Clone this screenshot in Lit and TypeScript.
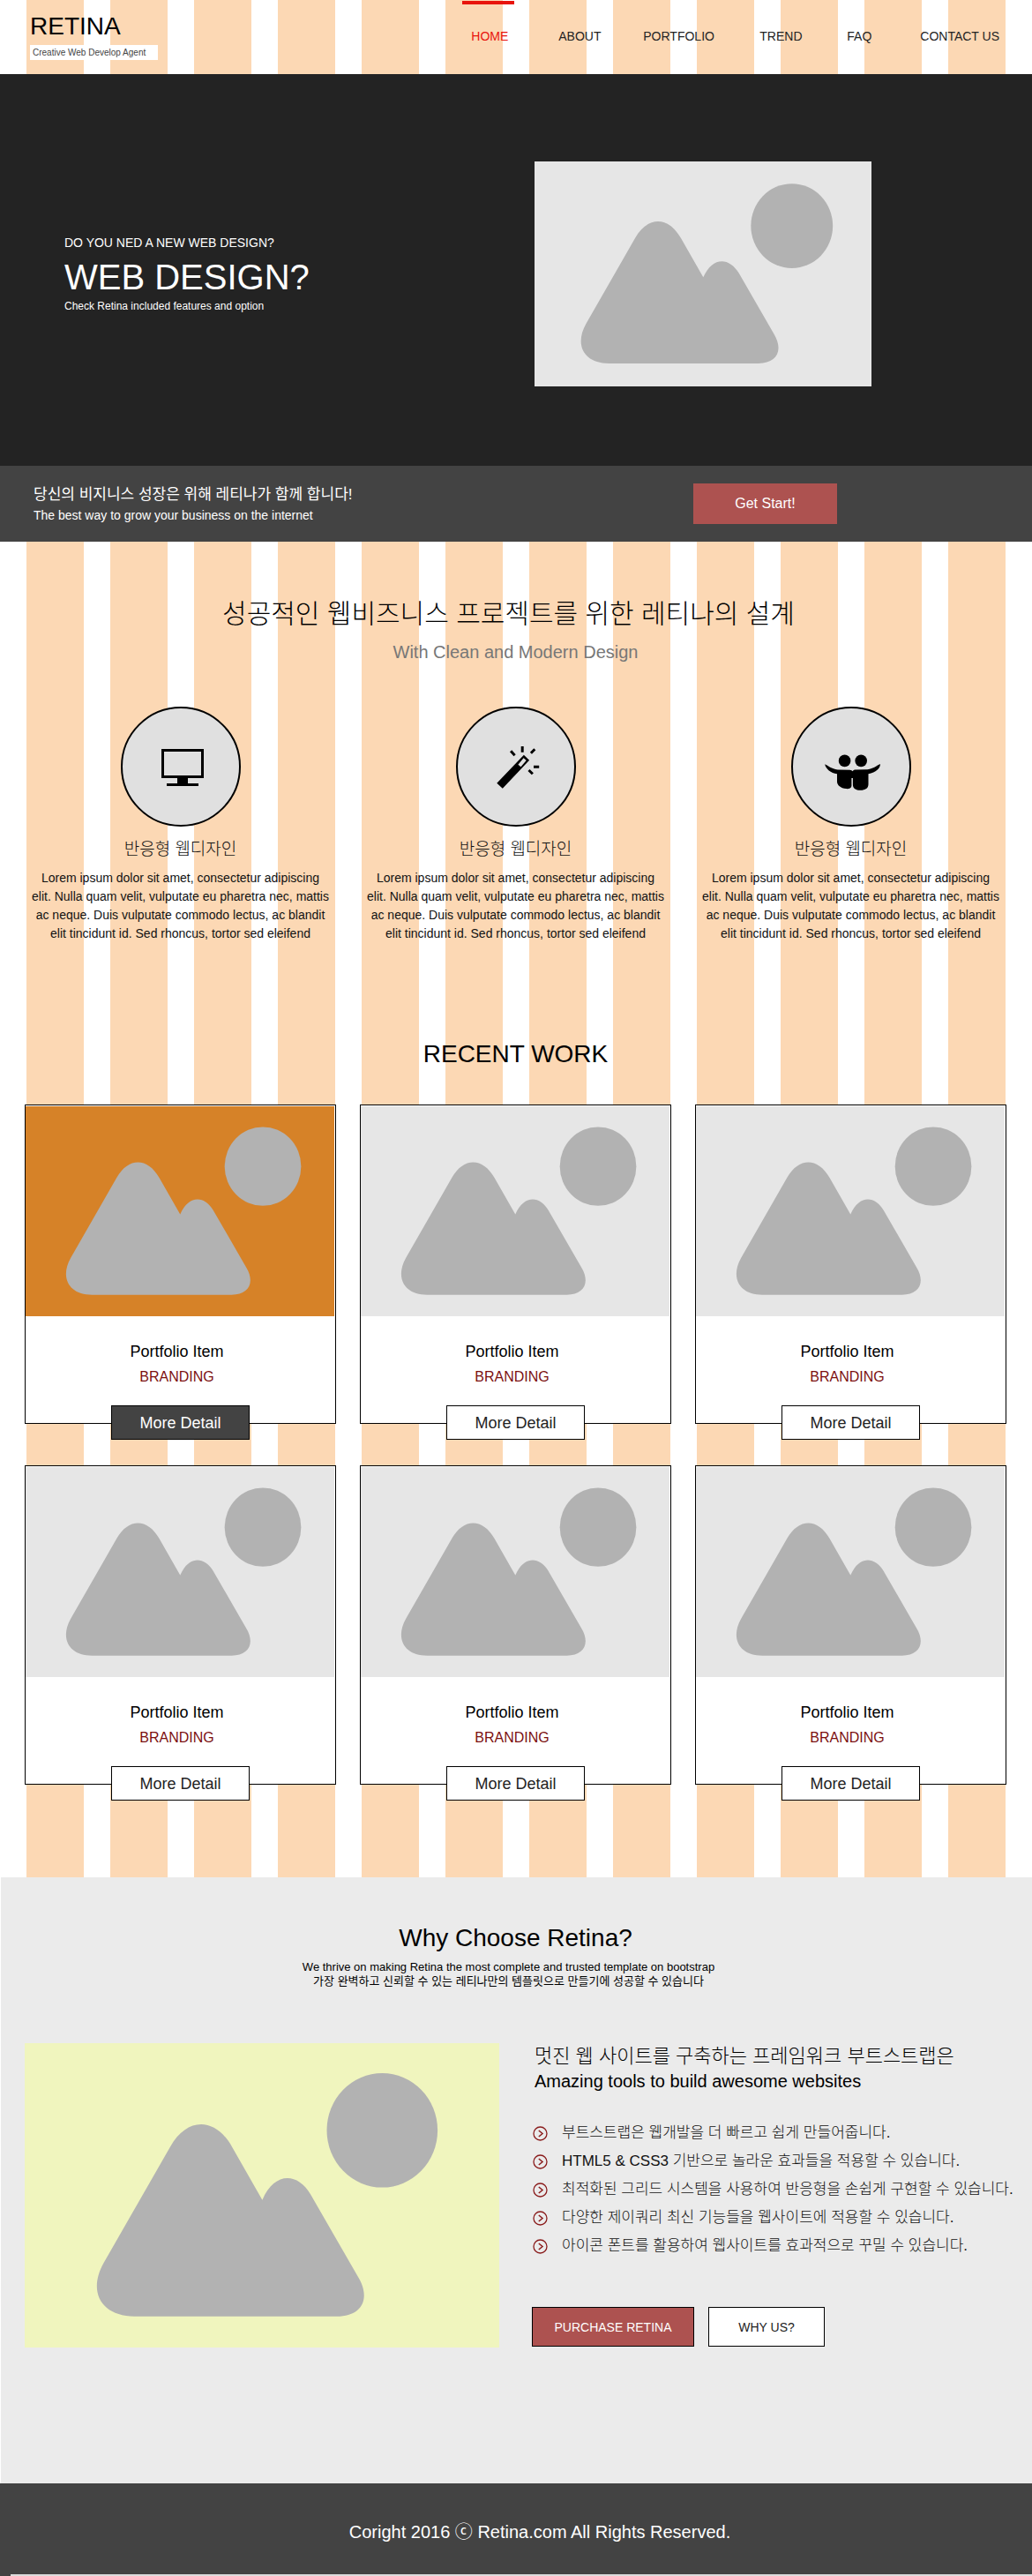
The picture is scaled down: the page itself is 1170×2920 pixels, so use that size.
import { LitElement, html, css, svg } from "lit";
import { customElement, property } from "lit/decorators.js";
import { classMap } from "lit/directives/class-map.js";

const reset = css`
  *,
  *::before,
  *::after {
    box-sizing: border-box;
  }
  h1,
  h2,
  h3,
  p,
  ul {
    margin: 0;
    padding: 0;
    font-weight: 400;
  }
  ul {
    list-style: none;
  }
  a {
    color: inherit;
    text-decoration: none;
  }
  button {
    margin: 0;
    padding: 0;
    font-family: inherit;
    cursor: pointer;
    border-radius: 0;
  }
`;

/** Landscape placeholder; fills its box and crops at the sides. */
@customElement("picture-placeholder")
export class PicturePlaceholder extends LitElement {
  static styles = css`
    :host {
      display: block;
      background: #e6e6e6;
    }
    svg {
      display: block;
      width: 100%;
      height: 100%;
    }
  `;

  render() {
    return html`<svg
      viewBox="0 0 538 345"
      preserveAspectRatio="xMidYMid slice"
      fill="#b2b2b2"
      aria-hidden="true"
    >
      <ellipse cx="405.3" cy="98.8" rx="62.8" ry="64.8" />
      <path
        d="M165 117.5C184 83.5 216 83.5 235 117.5L269.4 177.7C283 146 309 146 324 171.3L378 265C393 290 382 309.7 354 309.7H124.5C87 309.7 71 282 89.6 249Z"
      />
    </svg>`;
  }
}

@customElement("portfolio-card")
export class PortfolioCard extends LitElement {
  @property() heading = "";
  @property() category = "";
  @property({ type: Boolean }) active = false;

  static styles = [
    reset,
    css`
      :host {
        display: block;
      }
      .card {
        display: flex;
        flex-direction: column;
        align-items: center;
        padding-top: 1px;
        border: 1px solid #000;
        background: #fff;
      }
      .thumb {
        width: 100%;
        aspect-ratio: 351 / 238;
        border-right: 1px solid #fff;
      }
      .thumb.active {
        background: #d68228;
      }
      .caption {
        padding: 28px 8px 21px 0;
        text-align: center;
      }
      .heading {
        font-size: 18px;
        line-height: 24px;
        color: #000;
      }
      .category {
        margin-top: 6px;
        font-size: 16px;
        line-height: 22px;
        color: #7c0f0f;
      }
      .more {
        width: 157px;
        height: 39px;
        margin-bottom: -19px;
        border: 1px solid #000;
        background: #fff;
        color: #232323;
        font-size: 18px;
        line-height: 24px;
      }
      .more.active {
        background: #434343;
        color: #fff;
      }
    `,
  ];

  render() {
    const state = { active: this.active };
    return html`<article class="card">
      <picture-placeholder
        class=${classMap({ thumb: true, ...state })}
      ></picture-placeholder>
      <div class="caption">
        <h3 class="heading">${this.heading}</h3>
        <p class="category">${this.category}</p>
      </div>
      <button type="button" class=${classMap({ more: true, ...state })}>
        More Detail
      </button>
    </article>`;
  }
}

const monitorIcon = svg`
  <path fill-rule="evenodd" d="M46 48h48v33H46zM49 51v27h42V51z" />
  <path d="M64 81h12v6h12v3H52v-3h12z" />`;

const wandIcon = svg`
  <path fill-rule="evenodd"
    d="M46.3 86.7L76.9 54.7 83.1 60.7 52.8 92.7zM76.6 58.3L70.4 65.7 73.5 68.3 79.7 61z" />
  <path fill="none" stroke="#000" stroke-width="3"
    d="M75.2 45v6.7M62.1 50.3l4.5 5M89.3 48.3l-4.4 4.4M88 68.3h6.2M82.5 72l4.4 4.3" />`;

const friendsIcon = svg`
  <circle cx="60.6" cy="61.4" r="6.8" />
  <circle cx="79.2" cy="61.4" r="6.8" />
  <path d="M38.2 65.2C42 66.8 45.5 70.6 52.7 71.4L66.5 71.7C68 71.7 69 72.5 69.6 73.3 70.2 72.3 71.5 71.6 73 71.6L86.5 71.2C93.5 70.4 97 66.8 100.9 65.1 101.3 69.8 96 74.6 87.5 76.3V88C87.5 92.5 84 94.8 78.5 94.8 73 94.8 69.9 92.5 69.9 88.5V81H68.4V90C68 92.5 65.5 93.3 62.5 93.1 56 92.5 52 89 52 85V76.3C45 75.2 39 70.5 38.2 65.2Z" />`;

const NAV = ["HOME", "ABOUT", "PORTFOLIO", "TREND", "FAQ", "CONTACT US"];
const FEATURES = [monitorIcon, wandIcon, friendsIcon];
const WORKS = [true, false, false, false, false, false];
const REASONS = [
  "부트스트랩은 웹개발을 더 빠르고 쉽게 만들어줍니다.",
  "HTML5 & CSS3 기반으로 놀라운 효과들을 적용할 수 있습니다.",
  "최적화된 그리드 시스템을 사용하여 반응형을 손쉽게 구현할 수 있습니다.",
  "다양한 제이쿼리 최신 기능들을 웹사이트에 적용할 수 있습니다.",
  "아이콘 폰트를 활용하여 웹사이트를 효과적으로 꾸밀 수 있습니다.",
];

@customElement("app-root")
export class AppRoot extends LitElement {
  static styles = [
    reset,
    css`
      :host {
        display: block;
        font-family: "Liberation Sans", Arial, "Noto Sans CJK KR", sans-serif;
        color: #000;
        background: repeating-linear-gradient(
          to right,
          #fff 0 30px,
          #fcd8b4 30px 95px
        );
      }

      .header {
        display: flex;
        justify-content: space-between;
        align-items: flex-start;
        min-height: 84px;
        padding: 0 30px 0 34px;
      }
      .brand {
        display: flex;
        flex-direction: column;
        align-items: flex-start;
        gap: 5px;
        padding-top: 14px;
      }
      .logo {
        font-size: 28px;
        line-height: 32px;
      }
      .tagline {
        padding: 0 14px 0 3px;
        background: #fff;
        color: #444;
        font-size: 10px;
        line-height: 17px;
      }
      .menu {
        display: grid;
        grid-template-columns: 99px 96px 132px 99px 83px auto;
        justify-items: start;
        padding-top: 1px;
      }
      .menu-link {
        display: block;
        padding: 26px 7px 0 10px;
        border-top: 4px solid transparent;
        color: #232323;
        font-size: 14px;
        line-height: 20px;
        white-space: nowrap;
      }
      .menu-link.current {
        border-top-color: #e8140c;
        color: #e8140c;
      }

      .hero {
        display: grid;
        grid-template-columns: 533fr 382fr;
        align-items: center;
        padding: 99px 182px 90px 73px;
        background: #232323;
        color: #fff;
      }
      .hero-kicker {
        font-size: 14px;
        line-height: 20px;
      }
      .hero-title {
        margin-top: 5px;
        font-size: 40px;
        line-height: 48px;
      }
      .hero-note {
        font-size: 12px;
        line-height: 18px;
      }
      .hero-picture {
        aspect-ratio: 382 / 255;
      }

      .callout {
        display: flex;
        justify-content: space-between;
        align-items: center;
        padding: 20px 221px 20px 38px;
        background: #434343;
        color: #fff;
      }
      .callout-title {
        font-size: 17px;
        line-height: 26px;
      }
      .callout-text {
        font-size: 14px;
        line-height: 20px;
      }
      .start {
        width: 163px;
        height: 46px;
        border: 0;
        background: #ad5250;
        color: #fff;
        font-size: 16px;
        line-height: 20px;
      }

      .features {
        padding: 60px 29px 0 28px;
        text-align: center;
      }
      .lead {
        padding-right: 16px;
      }
      .features-title {
        font-size: 30px;
        font-weight: 300;
        line-height: 44px;
      }
      .features-sub {
        margin-top: 8px;
        color: #777;
        font-size: 20px;
        line-height: 26px;
      }
      .columns {
        display: grid;
        grid-template-columns: repeat(3, minmax(0, 1fr));
        column-gap: 27px;
      }
      .feature-list {
        margin-top: 49px;
      }
      .feature {
        display: flex;
        flex-direction: column;
        align-items: center;
      }
      .feature-icon {
        display: block;
        width: 136px;
        height: 136px;
      }
      .feature-title {
        margin-top: 12px;
        color: #111;
        font-size: 19px;
        font-weight: 300;
        line-height: 28px;
      }
      .feature-text {
        margin-top: 8px;
        color: #111;
        font-size: 14px;
        line-height: 21px;
      }

      .works {
        padding: 108px 29px 105px 28px;
      }
      .section-title {
        font-size: 28px;
        line-height: 36px;
        text-align: center;
      }
      .work-list {
        margin-top: 39px;
        row-gap: 47px;
      }

      .why {
        margin-left: 1px;
        padding: 51px 29px 154px 27px;
        background: #ebebeb;
      }
      .why-page {
        background: #fff;
      }
      .why-sub {
        font-size: 13px;
        line-height: 16px;
        text-align: center;
      }
      .why-intro {
        margin-top: 7px;
      }
      .why-body {
        display: grid;
        grid-template-columns: repeat(2, minmax(0, 1fr));
        column-gap: 37px;
        align-items: start;
        margin-top: 62px;
      }
      .why-picture {
        aspect-ratio: 538 / 345;
        background: #f0f5be;
      }
      .why-heading {
        padding-left: 3px;
        font-size: 22px;
        font-weight: 300;
        line-height: 30px;
      }
      .why-tools {
        padding-left: 3px;
        font-size: 20px;
        line-height: 26px;
      }
      .reasons {
        margin-top: 30px;
        padding-left: 1px;
      }
      .reason {
        display: flex;
        align-items: center;
        gap: 16px;
        color: #111;
        font-size: 17px;
        font-weight: 300;
        line-height: 32px;
        white-space: nowrap;
      }
      .bullet {
        flex: none;
        width: 17px;
        height: 17px;
      }
      .actions {
        display: flex;
        gap: 16px;
        margin-top: 53px;
      }
      .action {
        width: 132px;
        height: 45px;
        border: 1px solid #000;
        background: #fff;
        color: #232323;
        font-size: 14px;
        line-height: 20px;
      }
      .action.primary {
        width: 184px;
        background: #ad5250;
        color: #fff;
      }

      .footer {
        background: #434343;
        color: #fff;
      }
      .copyright {
        padding: 41px 0 34px 54px;
        font-size: 20px;
        line-height: 28px;
        text-align: center;
      }
      .footer-rule {
        height: 2px;
        margin-left: 12px;
        background: #dcdcdc;
      }
    `,
  ];

  render() {
    return html`
      <header class="header">
        <div class="brand">
          <h1 class="logo"><a href="#">RETINA</a></h1>
          <p class="tagline">Creative Web Develop Agent</p>
        </div>
        <nav aria-label="Main">
          <ul class="menu">
            ${NAV.map(
              (label, i) => html`<li>
                <a
                  href="#"
                  class=${classMap({ "menu-link": true, current: i === 0 })}
                  >${label}</a
                >
              </li>`
            )}
          </ul>
        </nav>
      </header>

      <main>
        <section class="hero">
          <div>
            <p class="hero-kicker">DO YOU NED A NEW WEB DESIGN?</p>
            <h2 class="hero-title">WEB DESIGN?</h2>
            <p class="hero-note">Check Retina included features and option</p>
          </div>
          <picture-placeholder class="hero-picture"></picture-placeholder>
        </section>

        <section class="callout">
          <div>
            <p class="callout-title">
              당신의 비지니스 성장은 위해 레티나가 함께 합니다!
            </p>
            <p class="callout-text">
              The best way to grow your business on the internet
            </p>
          </div>
          <button type="button" class="start">Get Start!</button>
        </section>

        <section class="features">
          <h2 class="features-title lead">
            성공적인 웹비즈니스 프로젝트를 위한 레티나의 설계
          </h2>
          <p class="features-sub">With Clean and Modern Design</p>
          <div class="columns feature-list">
            ${FEATURES.map(
              (icon) => html`<article class="feature">
                <svg
                  class="feature-icon"
                  viewBox="0 0 136 136"
                  aria-hidden="true"
                >
                  <circle
                    cx="68"
                    cy="68"
                    r="67"
                    fill="#e0e0e0"
                    stroke="#000"
                    stroke-width="2"
                  />
                  ${icon}
                </svg>
                <h3 class="feature-title">반응형 웹디자인</h3>
                <p class="feature-text">
                  Lorem ipsum dolor sit amet, consectetur adipiscing<br />
                  elit. Nulla quam velit, vulputate eu pharetra nec, mattis<br />
                  ac neque. Duis vulputate commodo lectus, ac blandit<br />
                  elit tincidunt id. Sed rhoncus, tortor sed eleifend
                </p>
              </article>`
            )}
          </div>
        </section>

        <section class="works">
          <h2 class="section-title">RECENT WORK</h2>
          <div class="columns work-list">
            ${WORKS.map(
              (active) => html`<portfolio-card
                heading="Portfolio Item"
                category="BRANDING"
                ?active=${active}
              ></portfolio-card>`
            )}
          </div>
        </section>

        <div class="why-page">
          <section class="why">
            <h2 class="section-title">Why Choose Retina?</h2>
            <div class="why-intro lead">
              <p class="why-sub">
                We thrive on making Retina the most complete and trusted
                template on bootstrap
              </p>
              <p class="why-sub">
                가장 완벽하고 신뢰할 수 있는 레티나만의 템플릿으로 만들기에
                성공할 수 있습니다
              </p>
            </div>
            <div class="why-body">
              <picture-placeholder class="why-picture"></picture-placeholder>
              <div>
                <h3 class="why-heading">
                  멋진 웹 사이트를 구축하는 프레임워크 부트스트랩은
                </h3>
                <p class="why-tools">Amazing tools to build awesome websites</p>
                <ul class="reasons">
                  ${REASONS.map(
                    (text) => html`<li class="reason">
                      <svg
                        class="bullet"
                        viewBox="0 0 17 17"
                        fill="none"
                        stroke="#8a1c1c"
                        aria-hidden="true"
                      >
                        <circle cx="8.5" cy="8.5" r="7.5" stroke-width="1.3" />
                        <path d="M6.8 5L11 8.5 6.8 12" stroke-width="1.5" />
                      </svg>
                      <span>${text}</span>
                    </li>`
                  )}
                </ul>
                <div class="actions">
                  <button type="button" class="action primary">
                    PURCHASE RETINA
                  </button>
                  <button type="button" class="action">WHY US?</button>
                </div>
              </div>
            </div>
          </section>
        </div>
      </main>

      <footer class="footer">
        <p class="copyright">Coright 2016 ⓒ Retina.com All Rights Reserved.</p>
        <div class="footer-rule"></div>
      </footer>
    `;
  }
}
